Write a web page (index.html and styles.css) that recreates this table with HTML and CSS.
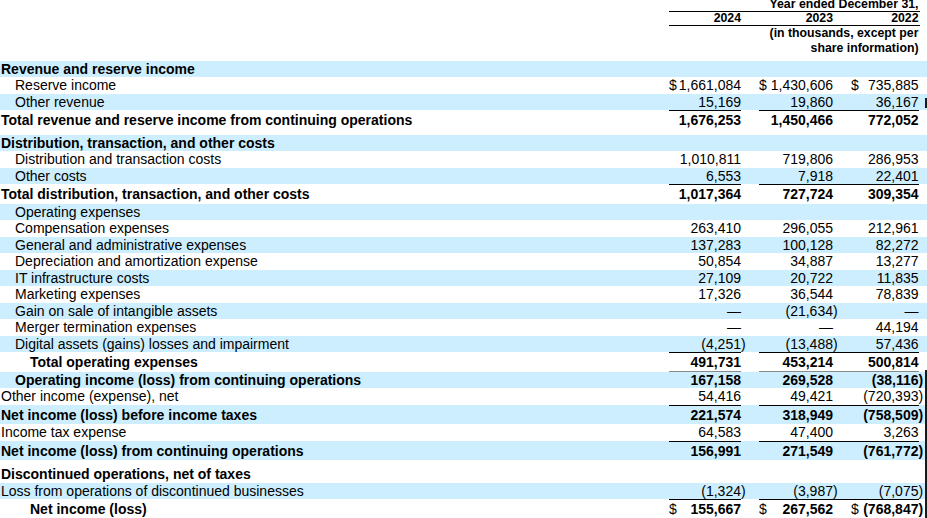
FILE: index.html
```
<!DOCTYPE html>
<html lang="en">
<head>
<meta charset="utf-8">
<title>Consolidated Statements of Operations</title>
<link rel="stylesheet" href="styles.css">
</head>
<body>
<div class="sheet">
  <div class="hrow"><div class="hspan">Year ended December 31,</div></div>
  <div class="hrow"><div class="hspan yrs"><span>2024</span><span></span><span>2023</span><span>2022</span></div></div>
  <div class="hrow"><div class="note">(in thousands, except per<br>share information)</div></div>
  <div class="hgap"></div>

  <div class="row blue"><div class="l b">Revenue and reserve income</div></div>
  <div class="row"><div class="l i1">Reserve income</div><div class="n c24"><span class="d">$</span><span class="v">1,661,084</span></div><div class="n c23"><span class="d">$</span><span class="v">1,430,606</span></div><div class="n c22"><span class="d">$</span><span class="v">735,885</span></div></div>
  <div class="row blue"><div class="l i1">Other revenue</div><div class="n c24"><span class="v">15,169</span></div><div class="n c23"><span class="v">19,860</span></div><div class="n c22"><span class="v">36,167</span></div></div>
  <div class="row tot b"><div class="l">Total revenue and reserve income from continuing operations</div><div class="n c24"><span class="v">1,676,253</span></div><div class="n c23"><span class="v">1,450,466</span></div><div class="n c22"><span class="v">772,052</span></div></div>
  <div class="sgap s5"></div>

  <div class="row blue"><div class="l b">Distribution, transaction, and other costs</div></div>
  <div class="row"><div class="l i1">Distribution and transaction costs</div><div class="n c24"><span class="v">1,010,811</span></div><div class="n c23"><span class="v">719,806</span></div><div class="n c22"><span class="v">286,953</span></div></div>
  <div class="row blue"><div class="l i1">Other costs</div><div class="n c24"><span class="v">6,553</span></div><div class="n c23"><span class="v">7,918</span></div><div class="n c22"><span class="v">22,401</span></div></div>
  <div class="row tot b"><div class="l">Total distribution, transaction, and other costs</div><div class="n c24"><span class="v">1,017,364</span></div><div class="n c23"><span class="v">727,724</span></div><div class="n c22"><span class="v">309,354</span></div></div>
  <div class="row blue"><div class="l i1">Operating expenses</div></div>
  <div class="row"><div class="l i1">Compensation expenses</div><div class="n c24"><span class="v">263,410</span></div><div class="n c23"><span class="v">296,055</span></div><div class="n c22"><span class="v">212,961</span></div></div>
  <div class="row blue"><div class="l i1">General and administrative expenses</div><div class="n c24"><span class="v">137,283</span></div><div class="n c23"><span class="v">100,128</span></div><div class="n c22"><span class="v">82,272</span></div></div>
  <div class="row"><div class="l i1">Depreciation and amortization expense</div><div class="n c24"><span class="v">50,854</span></div><div class="n c23"><span class="v">34,887</span></div><div class="n c22"><span class="v">13,277</span></div></div>
  <div class="row blue"><div class="l i1">IT infrastructure costs</div><div class="n c24"><span class="v">27,109</span></div><div class="n c23"><span class="v">20,722</span></div><div class="n c22"><span class="v">11,835</span></div></div>
  <div class="row"><div class="l i1">Marketing expenses</div><div class="n c24"><span class="v">17,326</span></div><div class="n c23"><span class="v">36,544</span></div><div class="n c22"><span class="v">78,839</span></div></div>
  <div class="row blue"><div class="l i1">Gain on sale of intangible assets</div><div class="n c24"><span class="v">—</span></div><div class="n c23"><span class="v">(21,634<span class="p">)</span></span></div><div class="n c22"><span class="v">—</span></div></div>
  <div class="row"><div class="l i1">Merger termination expenses</div><div class="n c24"><span class="v">—</span></div><div class="n c23"><span class="v">—</span></div><div class="n c22"><span class="v">44,194</span></div></div>
  <div class="row blue"><div class="l i1">Digital assets (gains) losses and impairment</div><div class="n c24"><span class="v">(4,251<span class="p">)</span></span></div><div class="n c23"><span class="v">(13,488<span class="p">)</span></span></div><div class="n c22"><span class="v">57,436</span></div></div>
  <div class="row tot under b"><div class="l i2">Total operating expenses</div><div class="n c24"><span class="v">491,731</span></div><div class="n c23"><span class="v">453,214</span></div><div class="n c22"><span class="v">500,814</span></div></div>
  <div class="row blue b"><div class="l i1">Operating income (loss) from continuing operations</div><div class="n c24"><span class="v">167,158</span></div><div class="n c23"><span class="v">269,528</span></div><div class="n c22"><span class="v">(38,116<span class="p">)</span></span></div></div>
  <div class="row"><div class="l">Other income (expense), net</div><div class="n c24"><span class="v">54,416</span></div><div class="n c23"><span class="v">49,421</span></div><div class="n c22"><span class="v">(720,393<span class="p">)</span></span></div></div>
  <div class="row blue tot b"><div class="l">Net income (loss) before income taxes</div><div class="n c24"><span class="v">221,574</span></div><div class="n c23"><span class="v">318,949</span></div><div class="n c22"><span class="v">(758,509<span class="p">)</span></span></div></div>
  <div class="row"><div class="l">Income tax expense</div><div class="n c24"><span class="v">64,583</span></div><div class="n c23"><span class="v">47,400</span></div><div class="n c22"><span class="v">3,263</span></div></div>
  <div class="row blue tot b"><div class="l">Net income (loss) from continuing operations</div><div class="n c24"><span class="v">156,991</span></div><div class="n c23"><span class="v">271,549</span></div><div class="n c22"><span class="v">(761,772<span class="p">)</span></span></div></div>
  <div class="sgap s6"></div>

  <div class="row"><div class="l b">Discontinued operations, net of taxes</div></div>
  <div class="row blue"><div class="l">Loss from operations of discontinued businesses</div><div class="n c24"><span class="v">(1,324<span class="p">)</span></span></div><div class="n c23"><span class="v">(3,987<span class="p">)</span></span></div><div class="n c22"><span class="v">(7,075<span class="p">)</span></span></div></div>
  <div class="row tot b"><div class="l i2">Net income (loss)</div><div class="n c24"><span class="d">$</span><span class="v">155,667</span></div><div class="n c23"><span class="d">$</span><span class="v">267,562</span></div><div class="n c22"><span class="d">$</span><span class="v">(768,847<span class="p">)</span></span></div></div>

  <div class="edge edge-top"></div>
  <div class="edge edge-bottom"></div>
</div>
</body>
</html>
```
FILE: styles.css
```
html, body {
  margin: 0;
  padding: 0;
  background: #fff;
}

body {
  width: 927px;
  height: 518px;
  overflow: hidden;
  font-family: "Liberation Sans", Arial, sans-serif;
  color: #000;
}

.sheet {
  position: relative;
  margin-top: -2px;
}

/* header */
.hrow {
  display: grid;
  grid-template-columns: 669px 72px 18px 74px 85.5px 1fr;
  font-size: 12.3px;
  font-weight: 700;
  line-height: 13px;
}

.hspan {
  grid-column: 2 / -1;
  margin-right: 7px;
  padding-right: 1.5px;
  border-bottom: 1px solid #000;
  text-align: right;
  white-space: nowrap;
}

.yrs {
  display: grid;
  grid-template-columns: 72px 18px 74px 85.5px;
}

.note {
  grid-column: 4 / 6;
  text-align: right;
  line-height: 14.5px;
  white-space: nowrap;
}

.hgap {
  height: 5.75px;
}

/* body rows */
.row {
  display: grid;
  grid-template-columns: 669px 72px 18px 74px 85.5px 1fr;
  font-size: 14px;
  line-height: 16.5px;
  white-space: nowrap;
}

.blue {
  background: #cceeff;
}

.b {
  font-weight: 700;
}

.l {
  grid-column: 1;
  padding-left: 1px;
}

.l.i1 {
  padding-left: 15px;
}

.l.i2 {
  padding-left: 30px;
}

.n {
  display: flex;
}

.n .v {
  margin-left: auto;
}

.n .d {
  font-weight: 400;
}

.p {
  margin-right: -0.333em;
}

.c24 {
  grid-column: 2;
}

.c23 {
  grid-column: 4;
}

.c22 {
  grid-column: 5;
  padding-left: 18px;
}

.tot > * {
  border-top: 1px solid transparent;
  padding-top: 1px;
  padding-bottom: 1px;
}

.tot > .c24,
.tot > .c23,
.tot > .c22 {
  border-top-color: #000;
}

.tot.under > * {
  padding-bottom: 0;
  border-bottom: 1px solid transparent;
}

.tot.under > .c24,
.tot.under > .c23,
.tot.under > .c22 {
  border-bottom-color: #8a8a8a;
}

.sgap.s5 {
  height: 5px;
}

.sgap.s6 {
  height: 6px;
}

/* thin frame edge visible at the right of the capture */
.edge {
  position: absolute;
  left: 925px;
  width: 1.5px;
  background: #1a1a1a;
}

.edge-top {
  top: 100px;
  height: 10px;
}

.edge-bottom {
  top: 372px;
  height: 150px;
}
```
